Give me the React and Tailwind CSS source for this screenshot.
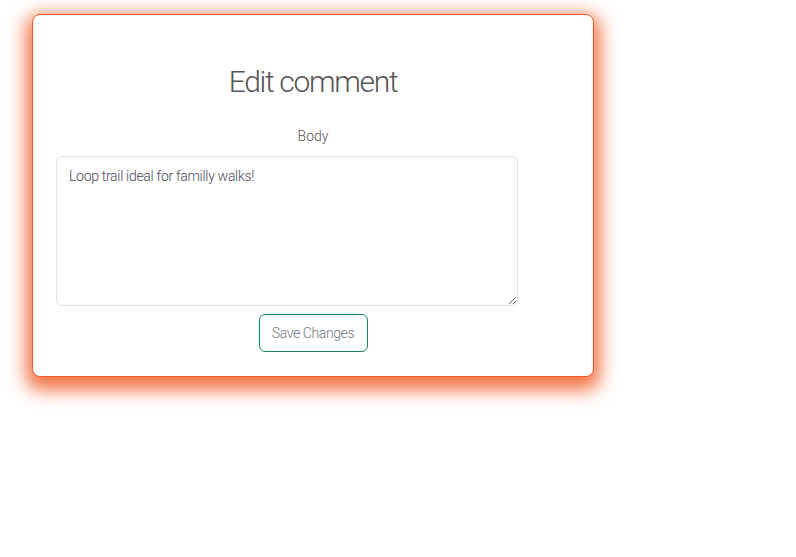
import React from "react";

export default function App() {
  return (
    <div className="w-[796px] h-[557px] bg-white" style={{ fontFamily: "Roboto, 'Liberation Sans', sans-serif" }}>
      <div className="pl-[32px] pt-[14px]">
        <div className="w-[562px] h-[363px] bg-white border border-[#ee5a24] rounded-[8px] shadow-[0_7px_18px_6px_rgba(240,90,36,0.85)] flex flex-col items-center pt-[48px] px-[23px]">
          <h1 className="text-[30px] leading-[38px] font-light text-[#555] tracking-[-1.3px]">Edit comment</h1>
          <label className="mt-[23px] text-[14px] leading-[24px] font-light text-[#555]">Body</label>
          <textarea
            defaultValue="Loop trail ideal for familly walks!"
            className="mt-[8px] self-start w-[462px] h-[150px] border border-[#dee2e6] rounded-[6px] px-[12px] py-[7px] text-[14px] leading-[24px] font-light tracking-[-0.3px] text-[#4a4a5a] outline-none resize-y"
          />
          <button className="mt-[8px] w-[109px] h-[38px] border border-[#198754] rounded-[6px] text-[14px] font-light tracking-[-0.4px] text-[#6c757d]">Save Changes</button>
        </div>
      </div>
    </div>
  );
}
